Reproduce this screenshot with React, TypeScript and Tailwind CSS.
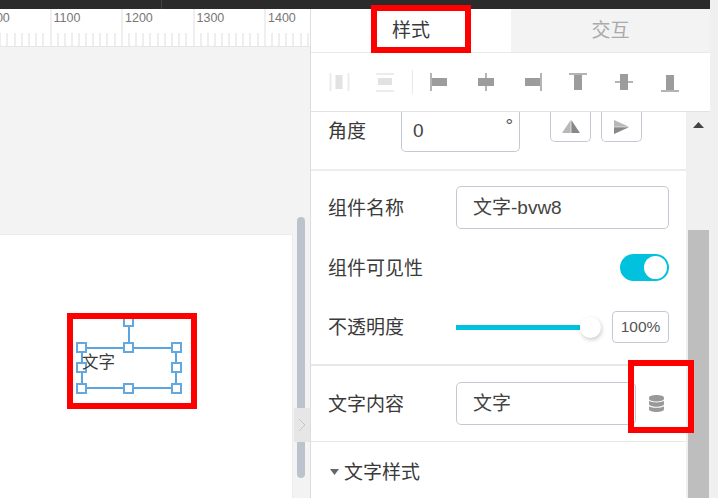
import React from "react";
import { FaDatabase } from "react-icons/fa";

const LINE = "#b4b4b4";
const BAR = "#9c9c9c";

function Glyph({ children }: { children: React.ReactNode }) {
  return (
    <div className="w-[46.2px] shrink-0 flex items-center justify-center">
      <svg width="24" height="24" viewBox="0 0 24 24">{children}</svg>
    </div>
  );
}

function Toolbar() {
  return (
    <div className="h-[59px] pl-[5px] pb-[1px] flex items-stretch border-b border-[#e2e2e2] bg-white">
      <Glyph>
        <rect x="2.5" y="3" width="2" height="18" fill="#ececec" />
        <rect x="8.5" y="5" width="7" height="14" fill="#e2e2e2" />
        <rect x="20.5" y="3" width="2" height="18" fill="#ececec" />
      </Glyph>
      <Glyph>
        <rect x="3" y="3" width="18" height="2" fill="#ececec" />
        <rect x="5" y="8" width="14" height="7" fill="#e2e2e2" />
        <rect x="3" y="20" width="18" height="2" fill="#ececec" />
      </Glyph>
      <div className="w-[8px] shrink-0 flex justify-center items-center">
        <div className="w-[1px] h-[24px] bg-[#e8e8e8]" />
      </div>
      <Glyph>
        <rect x="3" y="3" width="2" height="18" fill={LINE} />
        <rect x="5" y="8" width="15" height="8" fill={BAR} />
      </Glyph>
      <Glyph>
        <rect x="11" y="3" width="2" height="18" fill={LINE} />
        <rect x="4" y="8" width="16" height="8" fill={BAR} />
      </Glyph>
      <Glyph>
        <rect x="20" y="3" width="2" height="18" fill={LINE} />
        <rect x="5" y="8" width="15" height="8" fill={BAR} />
      </Glyph>
      <Glyph>
        <rect x="3" y="3" width="18" height="2" fill={LINE} />
        <rect x="8" y="5" width="8" height="15" fill={BAR} />
      </Glyph>
      <Glyph>
        <rect x="3" y="11" width="18" height="2" fill={LINE} />
        <rect x="8" y="4" width="8" height="16" fill={BAR} />
      </Glyph>
      <Glyph>
        <rect x="3" y="20" width="18" height="2" fill={LINE} />
        <rect x="8" y="5" width="8" height="15" fill={BAR} />
      </Glyph>
    </div>
  );
}

function RulerSegment({ label }: { label: string }) {
  return (
    <div className="w-[71.5px] shrink-0 h-full border-l-2 border-[#efefef] flex flex-col justify-between">
      <div className="pl-[2px] pt-[1px] text-[12.5px] leading-[16px] text-[#777777]">{label}</div>
      <div className="flex gap-[5.15px] pl-[5px]">
        {Array.from({ length: 9 }).map((_, i) => (
          <div key={i} className="w-[2px] h-[13px] bg-[#eeeeee]" />
        ))}
      </div>
    </div>
  );
}

function LeftColumn() {
  return (
    <div className="w-[311px] shrink-0 h-full border-r border-[#dcdcdc] bg-[#f3f3f3] flex flex-col overflow-hidden">
      <div className="h-[38px] shrink-0 bg-white border-b border-[#e6e6e6] flex overflow-hidden ml-[-22px]">
        {["1000", "1100", "1200", "1300", "1400"].map((l) => (
          <RulerSegment key={l} label={l} />
        ))}
      </div>
      <div className="h-[187px] shrink-0" />
      <div className="flex-1 w-[293px] bg-white border-t border-r border-[#ececec]" />
    </div>
  );
}

function Label({ children }: { children: React.ReactNode }) {
  return <div className="text-[19px] leading-[26px] pt-[2px] text-[#3a3a3a]">{children}</div>;
}

function RightColumn() {
  return (
    <div className="flex-1 h-full flex flex-col bg-white overflow-hidden">
      <div className="h-[44px] shrink-0 flex border-b border-[#e8e8e8]">
        <div className="w-[200px] bg-white flex items-center justify-center pt-[2px] text-[19px] text-[#3a3a3a]">样式</div>
        <div className="flex-1 bg-[#f3f3f3] flex items-center justify-center pt-[2px] text-[19px] text-[#aaaaaa]">交互</div>
      </div>
      <Toolbar />
      <div className="flex-1 flex min-h-0">
        <div className="w-[375px] shrink-0 bg-white flex flex-col">
          <div className="h-[59px] shrink-0 border-b-2 border-[#ececec] pl-[17px] flex items-start">
            <div className="w-[73px] shrink-0 pt-[5px]"><Label>角度</Label></div>
            <div className="w-[119px] h-[40px] shrink-0 border border-t-0 border-[#c5c9d3] rounded-b-[5px] pl-[11px] pr-[6px] flex justify-between">
              <span className="text-[19px] leading-[38px] text-[#444444]">0</span>
              <span className="text-[19px] leading-[28px] text-[#555555]">°</span>
            </div>
            <div className="ml-[30px] w-[41px] h-[30px] shrink-0 border border-t-0 border-[#c5c9d3] rounded-b-[5px] flex items-center justify-center">
              <svg width="18" height="13" viewBox="0 0 18 13">
                <path d="M8.7 0 V13 H0 Z" fill="#b8b8b8" />
                <path d="M9.3 0 V13 H18 Z" fill="#888888" />
              </svg>
            </div>
            <div className="ml-[10px] w-[41px] h-[30px] shrink-0 border border-t-0 border-[#c5c9d3] rounded-b-[5px] flex items-center justify-center">
              <svg width="15" height="14" viewBox="0 0 15 14">
                <path d="M0 0 L15 6.7 H0 Z" fill="#b8b8b8" />
                <path d="M0 7.3 H15 L0 14 Z" fill="#888888" />
              </svg>
            </div>
          </div>
          <div className="shrink-0 border-b-2 border-[#e8e8e8] pl-[17px] pr-[17px] pt-[15px] pb-[21px] flex flex-col">
            <div className="h-[43px] flex items-center justify-between">
              <Label>组件名称</Label>
              <div className="w-[213px] h-[43px] border border-[#c5c9d3] rounded-[5px] pl-[16px] pt-[2px] flex items-center text-[19px] text-[#444444]">文字-bvw8</div>
            </div>
            <div className="mt-[25px] h-[27px] flex items-center justify-between">
              <Label>组件可见性</Label>
              <div className="w-[49px] h-[27px] rounded-full bg-[#00c1de] flex items-center justify-end pr-[2px]">
                <div className="w-[23px] h-[23px] rounded-full bg-white" />
              </div>
            </div>
            <div className="mt-[30px] h-[32px] flex items-center justify-between">
              <Label>不透明度</Label>
              <div className="flex items-center">
                <div className="w-[124px] h-[5px] bg-[#00c1de]" />
                <div className="w-[21px] h-[21px] rounded-full bg-white shadow-[1px_2px_4px_rgba(0,0,0,0.2)]" />
                <div className="ml-[11px] w-[57px] h-[32px] border border-[#c5c9d3] rounded-[4px] flex items-center justify-center text-[15.5px] text-[#555555]">100%</div>
              </div>
            </div>
          </div>
          <div className="shrink-0 h-[76px] border-b border-[#e8e8e8] pl-[17px] pt-[16px] flex items-start">
            <div className="w-[128px] shrink-0 h-[43px] flex items-center"><Label>文字内容</Label></div>
            <div className="w-[180px] shrink-0 h-[43px] border border-[#c5c9d3] rounded-[5px] pl-[16px] pt-[2px] flex items-center text-[19px] text-[#444444]">文字</div>
            <div className="w-[40px] h-[43px] flex items-center justify-center">
              <FaDatabase size={17} color="#999999" />
            </div>
          </div>
          <div className="h-[60px] shrink-0 pl-[19px] flex items-center gap-[5px]">
            <svg width="9" height="6" viewBox="0 0 9 6"><path d="M0 0 H9 L4.5 6 Z" fill="#666666" /></svg>
            <Label>文字样式</Label>
          </div>
        </div>
        <div className="flex-1 flex flex-col items-start pl-[2px] bg-[#f0f0f0]">
          <div className="w-[21px] h-[118px] flex justify-center pt-[10px] shrink-0">
            <svg width="11" height="6" viewBox="0 0 11 6"><path d="M5.5 0 L11 6 H0 Z" fill="#444444" /></svg>
          </div>
          <div className="w-[21px] flex-1 bg-[#bebebe]" />
        </div>
      </div>
    </div>
  );
}

const HANDLES = [
  "left-[123px] top-[316px]",
  "left-[76px] top-[342px]",
  "left-[123px] top-[342px]",
  "left-[171px] top-[342px]",
  "left-[76px] top-[362px]",
  "left-[171px] top-[362px]",
  "left-[76px] top-[383px]",
  "left-[123px] top-[383px]",
  "left-[171px] top-[383px]",
];

function Selection() {
  return (
    <>
      <div className="absolute left-[128px] top-[322px] w-[2px] h-[22px] bg-[#5aa5df]" />
      <div className="absolute left-[81px] top-[347px] w-[96px] h-[42px] border-2 border-[#5aa5df]" />
      {HANDLES.map((c) => (
        <div key={c} className={`absolute ${c} w-[11px] h-[11px] bg-white border-2 border-[#62a9e2]`} />
      ))}
      <div className="absolute left-[82px] top-[350px] text-[16.5px] leading-[24px] text-[#3a3a3a]">文字</div>
    </>
  );
}

export default function App() {
  return (
    <div className="relative w-[718px] h-[498px] overflow-hidden bg-[#f0f0f0] font-['Liberation_Sans','Noto_Sans_CJK_SC',sans-serif]">
      <div className="w-[710px] h-full flex flex-col">
        <div className="h-[9px] shrink-0 bg-[#2b2b2b] pl-[161px]">
          <div className="w-[1px] h-full bg-[#444444]" />
        </div>
        <div className="flex-1 flex min-h-0 w-[718px]">
          <LeftColumn />
          <div className="w-[399px] shrink-0 h-full"><RightColumn /></div>
        </div>
      </div>

      <div className="absolute left-[297px] top-[217px] w-[8px] h-[261px] rounded-full bg-[#bcc3cd]" />
      <div className="absolute left-[294px] top-[408px] w-[16px] h-[34px] bg-[#e6e6e6] flex items-center justify-center">
        <svg width="8" height="14" viewBox="0 0 8 14" fill="none"><path d="M1 1 L7 7 L1 13" stroke="#c8c8c8" strokeWidth="1" /></svg>
      </div>

      <Selection />

      <div className="absolute left-[371px] top-[5px] w-[100px] h-[48px] border-[6px] border-[#ff0000]" />
      <div className="absolute left-[67px] top-[313px] w-[130px] h-[96px] border-[6px] border-[#ff0000]" />
      <div className="absolute left-[628px] top-[360px] w-[66px] h-[73px] border-[6px] border-[#ff0000]" />
    </div>
  );
}
